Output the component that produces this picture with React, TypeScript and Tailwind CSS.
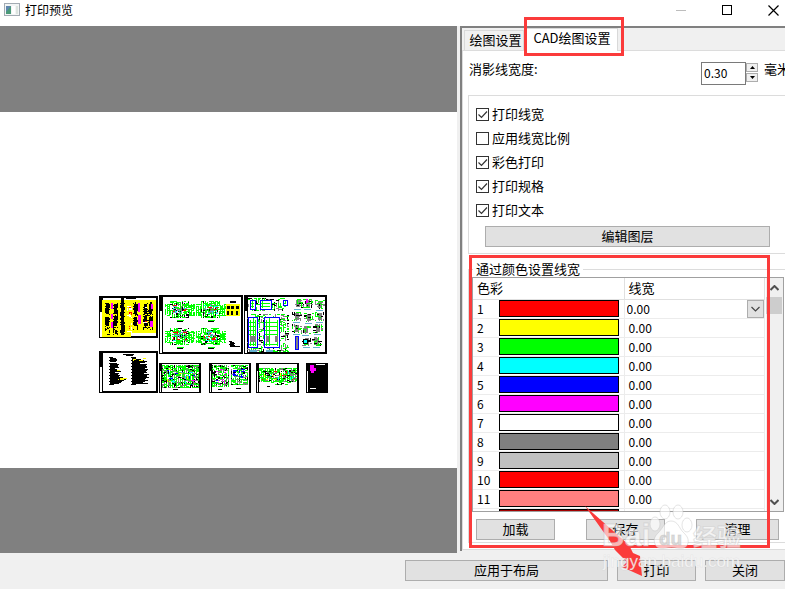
import { useState } from 'react';

const UI_FONT = "font-['Noto_Sans_CJK_SC','Noto_Sans',sans-serif]";

const BUTTON =
  'h-[21px] shrink-0 border border-[#adadad] bg-[#e1e1e1] pb-[2px] text-[13px] leading-none text-black';

const ROWS = [
  { id: 1, color: 'bg-[#ff0000]' },
  { id: 2, color: 'bg-[#ffff00]' },
  { id: 3, color: 'bg-[#00ff00]' },
  { id: 4, color: 'bg-[#00ffff]' },
  { id: 5, color: 'bg-[#0000ff]' },
  { id: 6, color: 'bg-[#ff00ff]' },
  { id: 7, color: 'bg-white' },
  { id: 8, color: 'bg-[#808080]' },
  { id: 9, color: 'bg-[#c0c0c0]' },
  { id: 10, color: 'bg-[#ff0000]' },
  { id: 11, color: 'bg-[#ff8080]' },
];

const OPTIONS = [
  { label: '打印线宽', on: true },
  { label: '应用线宽比例', on: false },
  { label: '彩色打印', on: true },
  { label: '打印规格', on: true },
  { label: '打印文本', on: true },
];

const GREEN = '#00ff00';
const GREY = '#808080';
const STEEL = '#63b1cf';
const BLUE = '#0000ff';
const CYAN = '#00ffff';
const YELLOW = '#ffff00';
const MAGENTA = '#ff00ff';

type BoxProps = { x: number; y: number; w: number; h: number };

// dense cad linework collapses into short dashes at this zoom
const Linework = ({
  x,
  y,
  w,
  h,
  colors,
  density,
  seed,
}: BoxProps & { colors: string[]; density: number; seed: number }) => {
  let s = seed * 7919;
  const rand = () => {
    s = (s * 16807) % 2147483647;
    return s / 2147483647;
  };
  const marks = [];
  for (let j = 0; j < h; j++) {
    for (let i = 0; i < w; i += 2) {
      if (rand() < density) {
        const vertical = rand() > 0.6;
        marks.push(
          <rect
            key={`${i}-${j}`}
            x={x + i}
            y={y + j}
            width={vertical ? 1 : Math.min(2 + Math.floor(rand() * 3), w - i)}
            height={vertical ? Math.min(3, h - j) : 1}
            fill={colors[Math.floor(rand() * colors.length)]}
          />
        );
      }
    }
  }
  return <g>{marks}</g>;
};

const Sheet = ({ x, y, w, h }: BoxProps) => (
  <g>
    <rect x={x} y={y} width={w} height={h} fill="#000" />
    <rect x={x + 4} y={y + 2} width={w - 6} height={h - 4} fill="#fff" />
    <rect x={x + 1} y={y + 16} width={2} height={h - 17} fill="#fff" />
  </g>
);

const SmallSheet = ({ x, y, w, h }: BoxProps) => (
  <g>
    <rect x={x} y={y} width={w} height={h} fill="#000" />
    <rect x={x + 3} y={y + 1} width={w - 5} height={h - 2} fill="#fff" />
    <rect x={x + 1} y={y + 8} width={1} height={h - 9} fill="#fff" />
  </g>
);

const TextBlock = ({ x, y, lines }: { x: number; y: number; lines: number[] }) => (
  <g>
    {lines.map((len, i) => (
      <rect key={i} x={x + (i % 3 === 0 ? 0 : 1)} y={y + i} width={len} height={1} fill="#000" />
    ))}
  </g>
);

const Drawings = () => (
  <svg width="229" height="98" viewBox="0 0 229 98" shapeRendering="crispEdges">
    <Sheet x={0} y={1} w={59} h={42} />
    <rect x={3} y={5} width={29} height={37} fill={YELLOW} />
    <rect x={32} y={5} width={25} height={33} fill={YELLOW} />
    <TextBlock x={27} y={3} lines={[10]} />
    {[6, 14, 21, 34, 44, 49].map((cx, i) => (
      <g key={cx}>
        <Linework x={cx} y={7} w={5} h={i > 2 ? 28 : 33} colors={['#000', '#000', '#000', YELLOW]} density={0.4} seed={11 + i} />
        <rect x={cx + 1} y={9} width={3} height={10} fill="#000" />
        <rect x={cx + 1} y={22} width={3} height={9} fill="#000" />
      </g>
    ))}
    <rect x={22} y={3} width={3} height={37} fill="#000" />
    <rect x={12} y={8} width={2} height={6} fill={MAGENTA} />
    <rect x={12} y={19} width={2} height={5} fill={MAGENTA} />
    <rect x={12} y={27} width={2} height={6} fill={MAGENTA} />
    <rect x={39} y={8} width={2} height={9} fill={MAGENTA} />
    <rect x={39} y={20} width={3} height={9} fill={MAGENTA} />
    <rect x={52} y={9} width={2} height={5} fill={MAGENTA} />
    <rect x={51} y={26} width={3} height={6} fill={MAGENTA} />
    <Linework x={28} y={9} w={5} h={29} colors={['#fff', '#fff', '#ff0000', YELLOW]} density={0.25} seed={29} />
    <Linework x={44} y={9} w={4} h={26} colors={['#ff0000', '#000', '#fff']} density={0.15} seed={27} />

    <Sheet x={60} y={0} w={84} h={59} />
    {[
      [68, 6],
      [99, 6],
      [68, 33],
      [99, 33],
    ].map(([bx, by], i) => (
      <g key={i}>
        <Linework x={bx - 2} y={by + 3} w={5} h={12} colors={[GREEN]} density={0.7} seed={40 + i} />
        <Linework x={bx + 22} y={by + 3} w={6} h={12} colors={[GREEN]} density={0.7} seed={45 + i} />
        <Linework x={bx + 3} y={by} w={19} h={17} colors={[GREEN, GREEN, GREEN, '#000']} density={0.6} seed={50 + i} />
        <Linework x={bx + 6} y={by + 3} w={14} h={10} colors={[GREY, GREY, CYAN, '#ff0000', STEEL, GREEN]} density={0.45} seed={60 + i} />
        <rect x={bx + 10} y={by + 19} width={7} height={1} fill={GREEN} />
        <rect x={bx + 10} y={by + 20} width={6} height={1} fill="#000" />
      </g>
    ))}
    <rect x={127} y={9} width={14} height={12} fill={YELLOW} />
    {[128, 132, 137].map((cx) => (
      <g key={cx}>
        <rect x={cx} y={11} width={3} height={3} fill="#000" />
        <rect x={cx} y={16} width={2} height={4} fill="#000" />
      </g>
    ))}
    <rect x={131} y={6} width={6} height={2} fill="#000" />
    <TextBlock x={130} y={46} lines={[3, 4, 5, 5, 5, 10]} />

    <Sheet x={145} y={0} w={83} h={59} />
    <Linework x={149} y={3} w={38} h={13} colors={[GREEN, GREEN, '#000', GREY]} density={0.4} seed={70} />
    {[
      [151, 5, 5, 9],
      [161, 5, 11, 9],
      [184, 5, 4, 5],
    ].map(([bx, by, bw, bh]) => (
      <g key={bx}>
        <rect x={bx} y={by} width={bw} height={bh} fill="#fff" stroke={BLUE} />
        <path d={`M${bx + 2} ${by + 1}v${bh - 2}M${bx + 1} ${by + 3}h${bw - 2}M${bx + 1} ${by + 6}h${bw - 2}`} stroke={GREEN} fill="none" />
      </g>
    ))}
    <Linework x={148} y={19} w={42} h={38} colors={[GREEN, GREEN, GREEN, '#000', GREY]} density={0.35} seed={71} />
    {[
      [149, 9],
      [165, 15],
    ].map(([bx, bw]) => (
      <g key={bx}>
        <rect x={bx} y={22} width={bw} height={30} fill="#fff" stroke={BLUE} />
        <path
          d={`M${bx + 2} 25v26M${bx + 5} 23v28M${bx + bw - 2} 25v26M${bx + 1} 27h${bw - 2}M${bx + 1} 31h${bw - 2}M${bx + 1} 35h${bw - 2}M${bx + 1} 39h${bw - 2}M${bx + 1} 49h${bw - 2}`}
          stroke={GREEN}
          fill="none"
        />
        <rect x={bx + 2} y={41} width={3} height={6} fill={GREY} />
        <rect x={bx + bw - 4} y={41} width={3} height={6} fill={GREY} />
        <rect x={bx + 2} y={55} width={7} height={2} fill={STEEL} />
      </g>
    ))}
    <rect x={196} y={41} width={3} height={13} fill={GREY} stroke={BLUE} />
    {[
      [194, 4],
      [204, 4],
      [216, 5],
      [193, 17],
      [205, 18],
      [216, 17],
      [193, 29],
      [202, 30],
      [214, 29],
      [203, 42],
      [213, 42],
    ].map(([bx, by], i) => (
      <g key={i}>
        <rect x={bx + 3} y={by + 1} width={4} height={7} fill={GREY} />
        <Linework x={bx} y={by} w={10} h={9} colors={[GREEN, GREEN, GREY, '#000']} density={0.35} seed={80 + i} />
        <rect x={bx + 1} y={by + 10} width={7} height={1} fill={STEEL} />
      </g>
    ))}
    <rect x={204} y={44} width={4} height={4} fill={CYAN} stroke="#000" />
    <rect x={207} y={4} width={2} height={4} fill={MAGENTA} />

    <Sheet x={0} y={56} w={59} h={42} />
    <rect x={24} y={59} width={11} height={1} fill="#000" />
    <rect x={27} y={60} width={7} height={1} fill="#000" />
    <TextBlock x={10} y={62} lines={[4, 6, 7, 8, 6, 0, 8, 9, 8, 9, 9, 5, 8, 9, 11, 6, 9, 8, 11, 9, 13, 11, 16, 14, 13, 11, 9, 5]} />
    <TextBlock x={32} y={62} lines={[5, 4, 9, 13, 15, 13, 9, 15, 14, 16, 15, 13, 17, 15, 14, 16, 12, 17, 16, 15, 17, 15, 13, 16, 14, 11, 16, 5]} />
    <Linework x={14} y={75} w={10} h={2} colors={[YELLOW]} density={0.4} seed={91} />
    <Linework x={34} y={63} w={17} h={3} colors={[YELLOW]} density={0.3} seed={92} />
    <Linework x={19} y={83} w={9} h={2} colors={[YELLOW]} density={0.4} seed={93} />

    <SmallSheet x={60} y={68} w={42} h={30} />
    <Linework x={63} y={70} w={37} h={23} colors={[GREEN, GREEN, GREEN, '#000', GREY]} density={0.9} seed={101} />
    <Linework x={68} y={74} w={28} h={16} colors={[CYAN, BLUE, YELLOW, '#fff', MAGENTA, GREY]} density={0.12} seed={102} />
    <rect x={74} y={94} width={5} height={1} fill="#000" />

    <SmallSheet x={110} y={68} w={42} h={30} />
    <Linework x={113} y={70} w={17} h={22} colors={[GREEN, GREEN, GREEN, '#000', GREY]} density={0.8} seed={103} />
    <Linework x={115} y={74} w={12} h={14} colors={[GREY, BLUE, '#fff', MAGENTA]} density={0.25} seed={104} />
    <Linework x={132} y={70} w={17} h={20} colors={[GREEN, GREEN, GREEN, '#000', GREY]} density={0.7} seed={105} />
    <Linework x={134} y={74} w={13} h={9} colors={[GREY, BLUE, BLUE, '#fff']} density={0.3} seed={106} />
    <rect x={119} y={94} width={4} height={1} fill="#000" />
    <rect x={137} y={93} width={5} height={1} fill="#000" />

    <SmallSheet x={157} y={68} w={43} h={30} />
    <Linework x={160} y={73} w={38} h={14} colors={[GREEN, GREEN, GREEN, GREY, '#000']} density={0.85} seed={107} />
    <Linework x={163} y={76} w={33} h={9} colors={[GREY, YELLOW, '#fff', CYAN, '#ff0000']} density={0.15} seed={108} />
    <Linework x={164} y={87} w={30} h={3} colors={[GREEN, GREEN, '#000']} density={0.3} seed={109} />
    <rect x={168} y={91} width={3} height={1} fill="#000" />

    <rect x={207} y={68} width={22} height={30} fill="#000" />
    <rect x={208} y={76} width={1} height={21} fill="#fff" />
    <path d="M211 70h4v3h2v3h-2v2h-3v-2h-1z" fill={MAGENTA} />
    <rect x={217} y={69} width={9} height={1} fill="#fff" />
    <rect x={211} y={93} width={6} height={1} fill="#fff" />
  </svg>
);

const TitleBar = () => (
  <header className="flex h-[26px] shrink-0 items-start justify-between bg-white">
    <div className="flex items-center gap-[5px] pl-1 pt-[2px]">
      <svg width="16" height="14" viewBox="0 0 16 14">
        <rect x="0.5" y="0.5" width="15" height="12" fill="#f2f5f5" stroke="#a3abb3" />
        <rect x="2" y="3" width="5" height="8" fill="#4a9a78" />
        <path d="M2 3h5L2 9z" fill="#5f86ae" />
        <path d="M8 3h3v8H8z" fill="#fff" />
        <path d="M12 3h2v8h-2z" fill="#dce4df" />
      </svg>
      <h1 className="text-[12px] leading-4">打印预览</h1>
    </div>
    <div className="flex gap-[22px]">
      <button aria-label="最小化" className="flex h-5 w-6 items-center justify-center">
        <svg width="11" height="11" viewBox="0 0 11 11">
          <path d="M0 5.5h10" stroke="#bdbdbd" />
        </svg>
      </button>
      <button aria-label="最大化" className="flex h-5 w-6 items-center justify-center">
        <svg width="11" height="11" viewBox="0 0 11 11">
          <rect x="0.5" y="0.5" width="9" height="9" fill="none" stroke="#000" />
        </svg>
      </button>
      <button aria-label="关闭窗口" className="flex h-5 w-6 items-center justify-center">
        <svg width="11" height="11" viewBox="0 0 11 11">
          <path d="M0.5 0.5l10 10M10.5 0.5l-10 10" stroke="#000" strokeWidth="1.2" />
        </svg>
      </button>
    </div>
  </header>
);

const CheckOption = ({ label, on }: { label: string; on: boolean }) => {
  const [checked, setChecked] = useState(on);
  return (
    <label className="flex h-4 items-center gap-[3px] text-[13px] leading-4">
      <span className="grid size-[13px]">
        <input
          type="checkbox"
          checked={checked}
          onChange={() => setChecked(!checked)}
          className="col-start-1 row-start-1 size-[13px] appearance-none border border-[#333] bg-white"
        />
        {checked && (
          <svg className="pointer-events-none col-start-1 row-start-1" width="13" height="13" viewBox="0 0 13 13">
            <path d="M2.5 6.5l3 3 5.5-6" fill="none" stroke="#333" strokeWidth="1.2" />
          </svg>
        )}
      </span>
      {label}
    </label>
  );
};

const ColorTable = () => (
  <div className="flex h-[235px] w-[312px] overflow-hidden border border-[#a0a0a0]">
    <table className="flex-1 table-fixed border-collapse self-start text-[12px] leading-4">
      <thead>
        <tr className="h-[21px] border-b border-[#e0e0e0] text-[13px]">
          <th className="w-[151px] border-r border-[#e0e0e0] p-0 pl-1 text-left font-normal">色彩</th>
          <th className="border-r border-[#e0e0e0] p-0 pl-1 text-left font-normal">线宽</th>
        </tr>
      </thead>
      <tbody>
        {ROWS.map((row) => (
          <tr key={row.id} className="h-[19px] border-b border-[#ececec]">
            <td className="border-r border-[#ececec] p-0">
              <div className="flex h-[18px] items-center pl-1">
                <span className="w-[22px]">{row.id}</span>
                <span className={`h-[17px] w-[120px] border border-black ${row.color}`} />
              </div>
            </td>
            <td className="border-r border-[#ececec] p-0">
              {row.id === 1 ? (
                <div className="grid h-[18px]">
                  <select
                    aria-label="线宽 1"
                    className="col-start-1 row-start-1 h-[18px] appearance-none pl-[2px] leading-4">
                    <option>0.00</option>
                  </select>
                  <span className="pointer-events-none col-start-1 row-start-1 flex h-[18px] w-[17px] items-center justify-center justify-self-end border border-[#adadad] bg-[#e1e1e1]">
                    <svg width="9" height="6" viewBox="0 0 9 6">
                      <path d="M0.5 1l4 4 4-4" fill="none" stroke="#444" strokeWidth="1.2" />
                    </svg>
                  </span>
                </div>
              ) : (
                <div className="h-[18px] pl-1 leading-[18px]">0.00</div>
              )}
            </td>
          </tr>
        ))}
        <tr>
          <td className="border-r border-[#ececec] p-0 pl-[26px]">
            <div className="h-[17px] w-[120px] border border-black bg-[#a50000]" />
          </td>
          <td className="border-r border-[#ececec] p-0" />
        </tr>
      </tbody>
    </table>
    <div className="ml-px flex w-[17px] shrink-0 flex-col bg-[#f0f0f0] pt-px">
      <button aria-label="向上滚动" className="flex h-[18px] items-center justify-center">
        <svg width="9" height="6" viewBox="0 0 9 6">
          <path d="M0.5 5l4-4 4 4" fill="none" stroke="#505050" strokeWidth="2" />
        </svg>
      </button>
      <div className="mr-px h-[17px] bg-[#cdcdcd]" />
      <button aria-label="向下滚动" className="mt-auto flex h-[18px] items-center justify-center">
        <svg width="9" height="6" viewBox="0 0 9 6">
          <path d="M0.5 1l4 4 4-4" fill="none" stroke="#505050" strokeWidth="2" />
        </svg>
      </button>
    </div>
  </div>
);

const SettingsPanel = () => (
  <aside className="w-[325px] shrink-0 overflow-hidden border-l-2 border-t-2 border-[#808080] bg-[#f0f0f0] pb-px">
    <div className="w-[340px]">
      <div role="tablist" className="flex h-[22px] items-end pl-[2px]">
        <button
          role="tab"
          aria-selected="false"
          className="h-5 w-[60px] border border-b-0 border-[#d9d9d9] bg-[#f0f0f0] pb-[2px] pl-[3px] text-[13px] leading-none">
          绘图设置
        </button>
        <button
          role="tab"
          aria-selected="true"
          className="-mb-px h-[23px] w-[94px] border border-b-0 border-[#d9d9d9] bg-white pb-[5px] pl-[2px] text-[13px] leading-none">
          CAD绘图设置
        </button>
      </div>
      <div className="border-y border-l border-[#dcdcdc] bg-white pb-[6px] pt-[10px]">
        <div className="flex h-6 items-start pl-[6px] text-[13px] leading-4">
          <label htmlFor="hidden-width" className="w-[232px]">
            消影线宽度:
          </label>
          <input
            id="hidden-width"
            defaultValue="0.30"
            className="mt-px h-[23px] w-[45px] border border-[#7a7a7a] bg-white pb-[2px] pl-[2px] text-[12px]"
          />
          <div className="mt-px flex w-3 flex-col gap-px pt-px">
            <button aria-label="增加" className="flex h-[9px] items-center justify-center border border-[#adadad] bg-[#f0f0f0]">
              <svg width="5" height="3" viewBox="0 0 5 3">
                <path d="M0 3l2.5-3L5 3z" />
              </svg>
            </button>
            <button aria-label="减少" className="flex h-[9px] items-center justify-center border border-[#adadad] bg-[#f0f0f0]">
              <svg width="5" height="3" viewBox="0 0 5 3">
                <path d="M0 0l2.5 3L5 0z" />
              </svg>
            </button>
          </div>
          <span className="ml-[6px]">毫米</span>
        </div>

        <div className="ml-[5px] mt-[10px] border border-[#dcdcdc] pb-[6px] pl-[7px] pt-[10px]">
          <div className="flex flex-col gap-2">
            {OPTIONS.map((o) => (
              <CheckOption key={o.label} {...o} />
            ))}
          </div>
          <button className={`${BUTTON} ml-[9px] mt-2 block w-[285px]`}>编辑图层</button>
        </div>

        <fieldset className="ml-[5px] mt-[7px] border border-[#dcdcdc] pb-[2px] pl-[3px]">
          <legend className="ml-px px-[3px] text-[13px] leading-4">通过颜色设置线宽</legend>
          <ColorTable />
          <div className="mt-[7px] flex gap-[31px] pl-1">
            <button className={`${BUTTON} w-[79px]`}>加载</button>
            <button className={`${BUTTON} w-[79px]`}>保存</button>
            <button className={`${BUTTON} w-[83px]`}>清理</button>
          </div>
        </fieldset>
      </div>
    </div>
  </aside>
);

// highlight boxes, arrow and site mark that sit on top of the dialog
const Annotations = () => (
  <div className="pointer-events-none absolute right-0 top-0 h-[589px] w-[328px]">
    <div className="absolute left-[67px] top-[17px] h-[39px] w-[100px] border-[3px] border-[#fb3b3b]" />
    <div className="absolute left-3 top-[255px] h-[293px] w-[301px] border-[3px] border-[#fb3b3b]" />
    <svg className="absolute left-[127px] top-[505px]" width="62" height="74" viewBox="584 505 62 74">
      <path d="M585 506L629 545L633 553L640 556L642 576L622 567L627 562L615 550L610 541Z" fill="#fb3b3b" />
    </svg>
    <svg
      className="absolute left-[143px] top-[498px]"
      width="150"
      height="80"
      viewBox="600 498 150 80"
      fill="#fff"
      fillOpacity="0.65"
      stroke="#bbb"
      strokeOpacity="0.4"
      strokeWidth="1">
      <text x="602" y="546" fontSize="31" fontWeight="700" fontFamily="Liberation Sans, sans-serif">
        Bai
      </text>
      <ellipse cx="655" cy="524" rx="5" ry="7" />
      <ellipse cx="665" cy="512" rx="5" ry="7" />
      <ellipse cx="678" cy="512" rx="5" ry="7" />
      <ellipse cx="687" cy="525" rx="5" ry="7" />
      <path d="M671 521c-6 0-8 7-12 11-4 4-6 7-4 12 2 5 7 5 11 4 4-1 7-1 11 0 5 1 10 0 11-5 1-5-2-8-5-11-4-4-5-11-12-11z" />
      <text x="659" y="545" fontSize="19" fontWeight="700" fontFamily="Liberation Sans, sans-serif" fill="#c9c9c9">
        du
      </text>
      <text x="693" y="546" fontSize="24" fontWeight="700" fontFamily="Noto Sans CJK SC, sans-serif">
        经验
      </text>
      <text x="603" y="567" fontSize="17" fontFamily="Liberation Sans, sans-serif" fillOpacity="0.85" strokeOpacity="0.2">
        jingyan.baidu.com
      </text>
    </svg>
  </div>
);

export default function App() {
  return (
    <div className={`${UI_FONT} relative flex min-h-screen flex-col overflow-hidden bg-[#f0f0f0] text-black`}>
      <TitleBar />
      <main className="flex">
        <section aria-label="预览" className="flex min-w-0 flex-1 flex-col bg-[#808080] pb-[85px] pt-[86px]">
          <div className="flex-1 bg-white pl-[99px] pt-[183px]">
            <Drawings />
          </div>
        </section>
        <div className="flex pb-[2px] pl-[3px]">
          <SettingsPanel />
        </div>
      </main>
      <footer className="flex justify-end py-[7px]">
        <div className="flex w-[380px] gap-[9px]">
          <button className={`${BUTTON} w-[203px]`}>应用于布局</button>
          <button className={`${BUTTON} w-[79px]`}>打印</button>
          <button className={`${BUTTON} w-[80px]`}>关闭</button>
        </div>
      </footer>
      <Annotations />
    </div>
  );
}
